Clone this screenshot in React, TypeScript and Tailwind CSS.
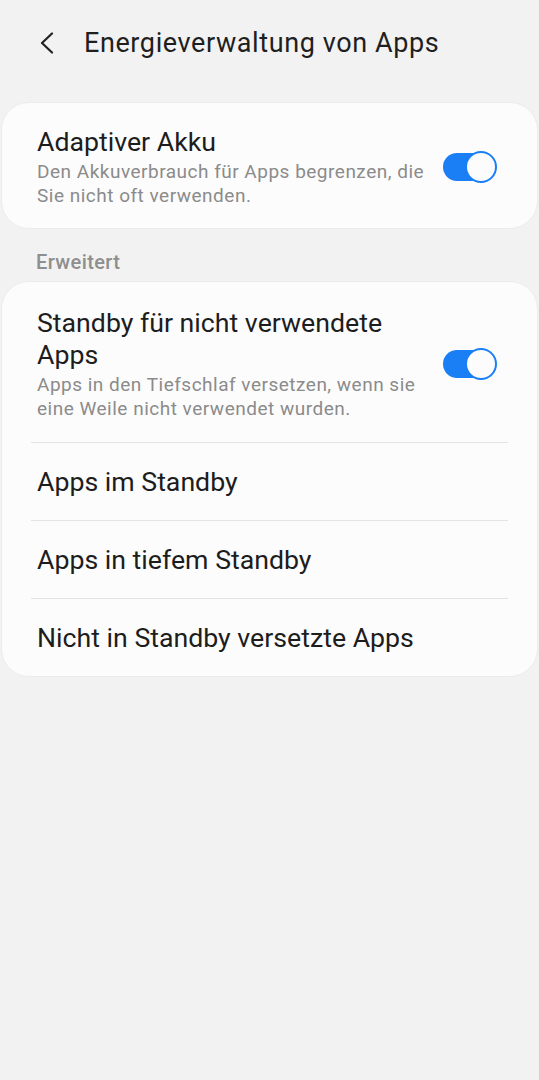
import React from 'react';

const Toggle = () => (
  <div className="relative w-[54px] h-[32px] shrink-0">
    <div className="absolute left-0 top-[2px] w-[48px] h-[28px] rounded-full bg-[#1a7ff5]" />
    <div className="absolute right-0 top-0 w-[32px] h-[32px] rounded-full bg-[#fcfcfc] border-2 border-[#1a7ff5]" />
  </div>
);

const SwitchRow = ({ title, desc }: { title: string; desc: string }) => (
  <div className="flex items-center pl-[35px] pr-[40px]">
    <div className="w-[392px]">
      <div className="text-[26.7px] leading-[32px] text-[#1d1d1d]">{title}</div>
      <div className="text-[19px] tracking-[0.5px] leading-[24px] text-[#8b8b8b] mt-[2px]">{desc}</div>
    </div>
    <div className="flex-1" />
    <Toggle />
  </div>
);

const LinkRow = ({ label }: { label: string }) => (
  <div>
    <div className="mx-[29px] h-px bg-[#e4e4e4]" />
    <div className="h-[77px] flex items-center pl-[35px] pt-[2px] text-[26.7px] text-[#1d1d1d]">{label}</div>
  </div>
);

export default function App() {
  return (
    <div
      className="w-[539px] h-[1080px] bg-[#f2f2f2] overflow-hidden"
      style={{ fontFamily: 'Roboto, "Noto Sans", sans-serif' }}
    >
      <header className="h-[86px] flex items-center">
        <div className="w-[84px] flex items-center pl-[39px]">
          <svg width="16" height="22" viewBox="0 0 16 22" fill="none">
            <path d="M13 1.5 L3 11 L13 20.5" stroke="#222" strokeWidth="2.2" strokeLinecap="round" strokeLinejoin="round" />
          </svg>
        </div>
        <h1 className="text-[27px] tracking-[0.6px] text-[#1f1f1f]">Energieverwaltung von Apps</h1>
      </header>

      <div className="mt-[16px] mx-[1px] rounded-[28px] bg-[#fcfcfc] border border-[#ececec] pt-[23px] pb-[20px]">
        <SwitchRow
          title="Adaptiver Akku"
          desc="Den Akkuverbrauch für Apps begrenzen, die Sie nicht oft verwenden."
        />
      </div>

      <div className="pl-[36px] mt-[21px] mb-[7px] text-[20px] tracking-[0.4px] leading-[24px] font-medium text-[#8e8e8e]">
        Erweitert
      </div>

      <div className="mx-[1px] rounded-[28px] bg-[#fcfcfc] border border-[#ececec]">
        <div className="pt-[25px] pb-[21px]">
          <SwitchRow
            title="Standby für nicht verwendete Apps"
            desc="Apps in den Tiefschlaf versetzen, wenn sie eine Weile nicht verwendet wurden."
          />
        </div>
        <LinkRow label="Apps im Standby" />
        <LinkRow label="Apps in tiefem Standby" />
        <LinkRow label="Nicht in Standby versetzte Apps" />
      </div>
    </div>
  );
}
